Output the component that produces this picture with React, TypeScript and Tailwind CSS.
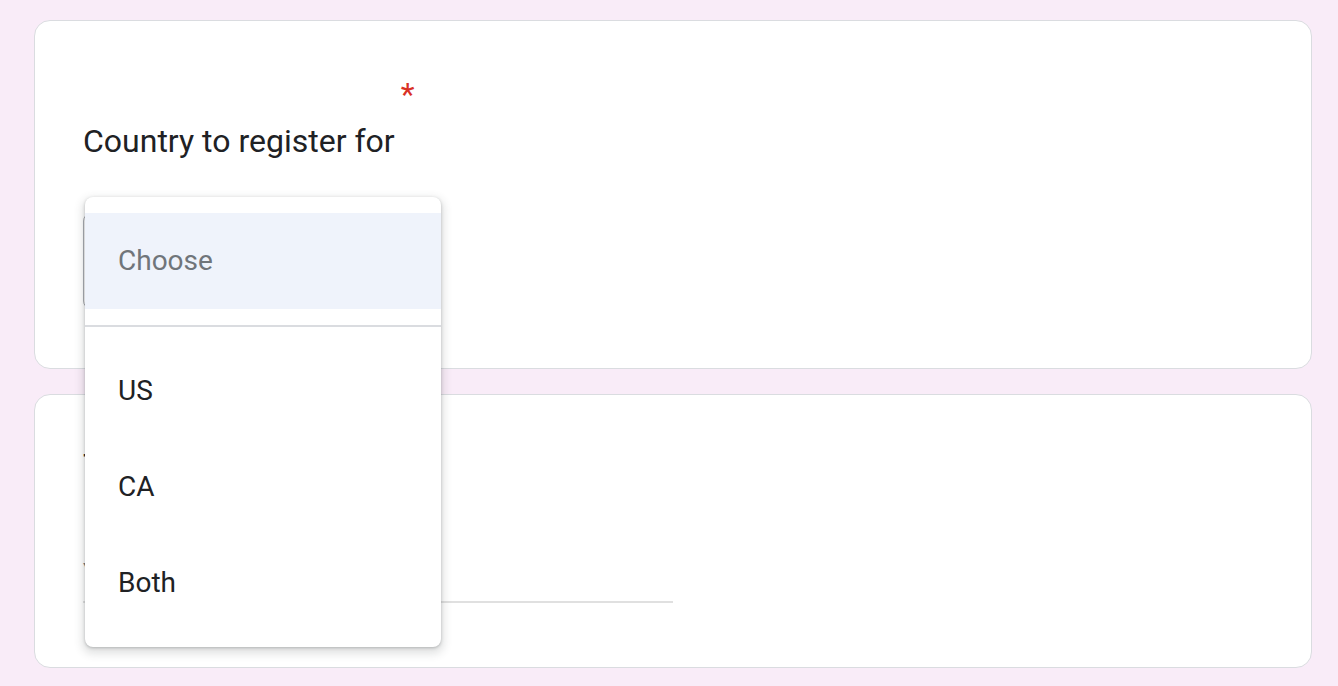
const OPTIONS = ['US', 'CA', 'Both']

function Dropdown() {
  return (
    <div className="absolute left-[50px] top-[176px] z-10 w-[356px] rounded-[8px] bg-white py-[16px] shadow-[0_1px_3px_0_rgba(60,64,67,0.3),0_4px_8px_3px_rgba(60,64,67,0.15)]">
      {/* Placeholder option (selected) */}
      <div className="flex h-[96px] items-center bg-[#eff3fb] pl-[33px] text-[28px] text-[#70757a]">Choose</div>
      <div className="my-[16px] h-[2px] bg-[#dadce0]" />
      {OPTIONS.map((o) => (
        <div key={o} className="flex h-[96px] items-center pl-[33px] text-[28px] text-[#202124]">
          {o}
        </div>
      ))}
    </div>
  )
}

export default function App() {
  return (
    <div className="min-h-[686px] bg-[#f9ecf8] px-[34px] pt-[20px] pb-[18px] font-['Roboto',sans-serif]">
      <div className="flex w-[1278px] flex-col gap-[25px]">
        {/* Card 1: country select */}
        <div className="relative h-[349px] rounded-[16px] border border-[#dadce0] bg-white px-[48px] pt-[96px]">
          <div className="relative w-fit text-[32px] leading-[48px] text-[#202124]">
            Country to register for
            <span className="absolute top-[-47px] right-[-20px] text-[32px] leading-[48px] text-[#d93025]">*</span>
          </div>
          <div className="mt-[48px] h-[96px] w-[300px] rounded-[8px] border border-[#a8abb0] bg-white" />
          <Dropdown />
        </div>

        {/* Card 2: text question */}
        <div className="h-[274px] rounded-[16px] border border-[#dadce0] bg-white px-[48px] pt-[46px]">
          <div className="text-[32px] leading-[48px] text-[#202124]">Tax ID</div>
          <div className="mt-[64px] w-1/2 border-b-[2px] border-[#e0e0e0] pb-[6px] text-[28px] leading-[42px] text-[#70757a]">
            Your answer
          </div>
        </div>
      </div>
    </div>
  )
}
